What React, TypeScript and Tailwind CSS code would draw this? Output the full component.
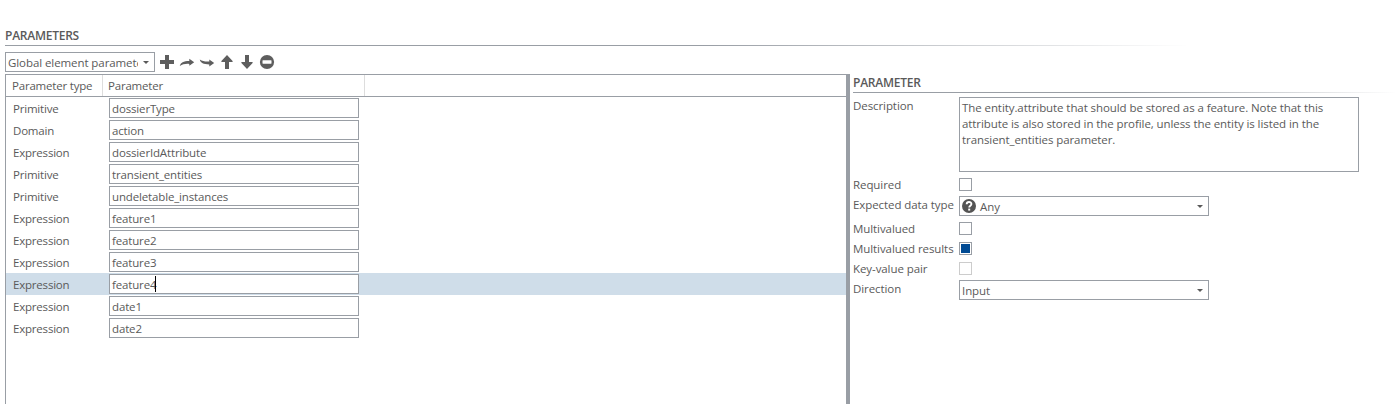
import React from "react";

const rows: { type: string; name: string; selected?: boolean }[] = [
  { type: "Primitive", name: "dossierType" },
  { type: "Domain", name: "action" },
  { type: "Expression", name: "dossierIdAttribute" },
  { type: "Primitive", name: "transient_entities" },
  { type: "Primitive", name: "undeletable_instances" },
  { type: "Expression", name: "feature1" },
  { type: "Expression", name: "feature2" },
  { type: "Expression", name: "feature3" },
  { type: "Expression", name: "feature4", selected: true },
  { type: "Expression", name: "date1" },
  { type: "Expression", name: "date2" },
];

function Caret() {
  return (
    <svg width="6" height="3" viewBox="0 0 6 3" className="shrink-0" fill="#5a5a5a">
      <path d="M0 0h6L3 3z" />
    </svg>
  );
}

function Icon({ children }: { children: React.ReactNode }) {
  return (
    <svg width="16" height="16" viewBox="0 0 16 16" fill="#5e5e5e" className="shrink-0">
      {children}
    </svg>
  );
}

function Toolbar() {
  return (
    <div className="flex gap-1">
      <Icon>
        <path d="M6 1h4v5h5v4h-5v5H6v-5H1V6h5z" />
      </Icon>
      <Icon>
        <path d="M0.800 12C1.500 8.500 4.500 6.900 10.300 6.900V4.800L15.200 8.300 10.300 11.800V9.900C6.500 9.600 3.500 10.200 0.800 12z" />
      </Icon>
      <Icon>
        <path d="M0.800 5.500C1.500 8.900 4.500 10.400 10.300 10.400V12.400L15.200 9 10.300 5.500V7.500C6.500 7.800 3.500 7.300 0.800 5.500z" />
      </Icon>
      <Icon>
        <path d="M8 1l5.600 6v1H10v7H6V8H2.400V7z" />
      </Icon>
      <Icon>
        <path d="M8 15l5.600-6V8H10V1H6v7H2.400v1z" />
      </Icon>
      <Icon>
        <circle cx="8" cy="8" r="7.100" />
        <rect x="3.500" y="6.300" width="9" height="3.400" rx="0.400" fill="#fff" />
      </Icon>
    </div>
  );
}

function Select({ label, icon }: { label: string; icon?: boolean }) {
  return (
    <div className="flex h-5 w-[250px] items-center border border-[#999ea5] pl-[2px] pr-[5px]">
      {icon && (
        <svg width="14" height="14" viewBox="0 0 14 14" className="mr-1 shrink-0">
          <circle cx="7" cy="7" r="7" fill="#545454" />
          <path d="M4.700 5.300C4.700 2.300 9.400 2.300 9.400 5.100C9.400 6.800 7.200 6.700 7.200 8.600" fill="none" stroke="#fff" strokeWidth="1.900" />
          <rect x="6.200" y="9.600" width="2" height="2" fill="#fff" />
        </svg>
      )}
      <span className="flex-1 pt-px">{label}</span>
      <Caret />
    </div>
  );
}

function Check({ checked, disabled }: { checked?: boolean; disabled?: boolean }) {
  return (
    <div className={`h-[13px] w-[13px] border p-px ${disabled ? "border-[#cccccc]" : "border-[#999ea5]"}`}>
      {checked && <div className="h-[9px] w-[9px] bg-[#004a93]" />}
    </div>
  );
}

function Field({ label, className, low, children }: { label: string; className: string; low?: boolean; children: React.ReactNode }) {
  return (
    <div className={`flex items-start ${className}`}>
      <div className={`w-[106px] shrink-0 whitespace-nowrap ${low ? "pt-px" : ""}`}>{label}</div>
      {children}
    </div>
  );
}

export default function App() {
  return (
    <div className="flex h-[404px] w-[1397px] flex-col overflow-hidden bg-white pl-[5px] pt-[27px] font-['Open_Sans',sans-serif] text-[11.5px] leading-4 tracking-[-0.08px] text-[#5a5a5a]">
      <h1 className="h-[18px] text-[12px] font-semibold leading-[18px] tracking-[-0.25px]">PARAMETERS</h1>
      <div className="h-px shrink-0 bg-linear-to-r from-[#999ea5] from-50% to-white to-[85%]" />
      <div className="flex min-h-0 flex-1">
        <div className="flex w-[841px] shrink-0 flex-col pt-[6px]">
          <div className="flex h-[22px] shrink-0 items-start gap-1">
            <div className="flex h-5 w-[150px] items-center border border-[#999ea5] pl-[2px] pr-[5px]">
              <span className="w-[130px] overflow-hidden whitespace-nowrap pt-px tracking-[-0.08px]">Global element parameters</span>
              <span className="flex-1" />
              <Caret />
            </div>
            <div className="pt-[2px]">
              <Toolbar />
            </div>
          </div>
          <div className="flex flex-1 flex-col border-l border-t border-[#999ea5]">
            <div className="flex h-[22px] shrink-0 border-b border-[#999ea5] leading-[22px] tracking-[-0.2px]">
              <div className="w-[97px] border-r border-[#dddddd] pl-[6px]">Parameter type</div>
              <div className="w-[262px] border-r border-[#dddddd] pl-[5px]">Parameter</div>
            </div>
            {rows.map((r, i) => (
              <div key={i} className={`flex h-[22px] shrink-0 items-center ${r.selected ? "bg-[#cfdde9]" : ""}`}>
                <div className="w-[103px] pl-[7px] pt-[2px] tracking-[-0.2px]">{r.type}</div>
                <div className="flex h-5 w-[250px] items-center border border-[#999ea5] bg-white pl-[2px] tracking-[-0.15px]">
                  <span className="pt-px">{r.name}</span>
                  {r.selected && <span className="-ml-px h-4 w-px bg-black" />}
                </div>
              </div>
            ))}
          </div>
        </div>
        <div className="mt-7 w-1 shrink-0 bg-[#999ea5]" />
        <div className="flex flex-1 flex-col pl-[3px] pt-7">
          <h2 className="h-[18px] text-[12px] font-semibold leading-[18px] tracking-[-0.25px]">PARAMETER</h2>
          <div className="h-px shrink-0 bg-linear-to-r from-[#999ea5] from-50% to-white" />
          <Field label="Description" className="mt-[4px] h-[80px]" low>
            <div className="h-[75px] w-[400px] whitespace-nowrap border border-[#999ea5] pl-[2px] pt-[2px]">
              The entity.attribute that should be stored as a feature. Note that this
              <br />
              attribute is also stored in the profile, unless the entity is listed in the
              <br />
              transient_entities parameter.
            </div>
          </Field>
          <Field label="Required" className="h-[19px]">
            <div className="pt-px">
              <Check />
            </div>
          </Field>
          <Field label="Expected data type" className="h-[25px]" low>
            <Select label="Any" icon />
          </Field>
          <Field label="Multivalued" className="h-5">
            <div className="pt-px">
              <Check />
            </div>
          </Field>
          <Field label="Multivalued results" className="h-5">
            <div className="pt-px">
              <Check checked />
            </div>
          </Field>
          <Field label="Key-value pair" className="h-[19px]">
            <div className="pt-px">
              <Check disabled />
            </div>
          </Field>
          <Field label="Direction" className="h-5" low>
            <Select label="Input" />
          </Field>
        </div>
      </div>
    </div>
  );
}
